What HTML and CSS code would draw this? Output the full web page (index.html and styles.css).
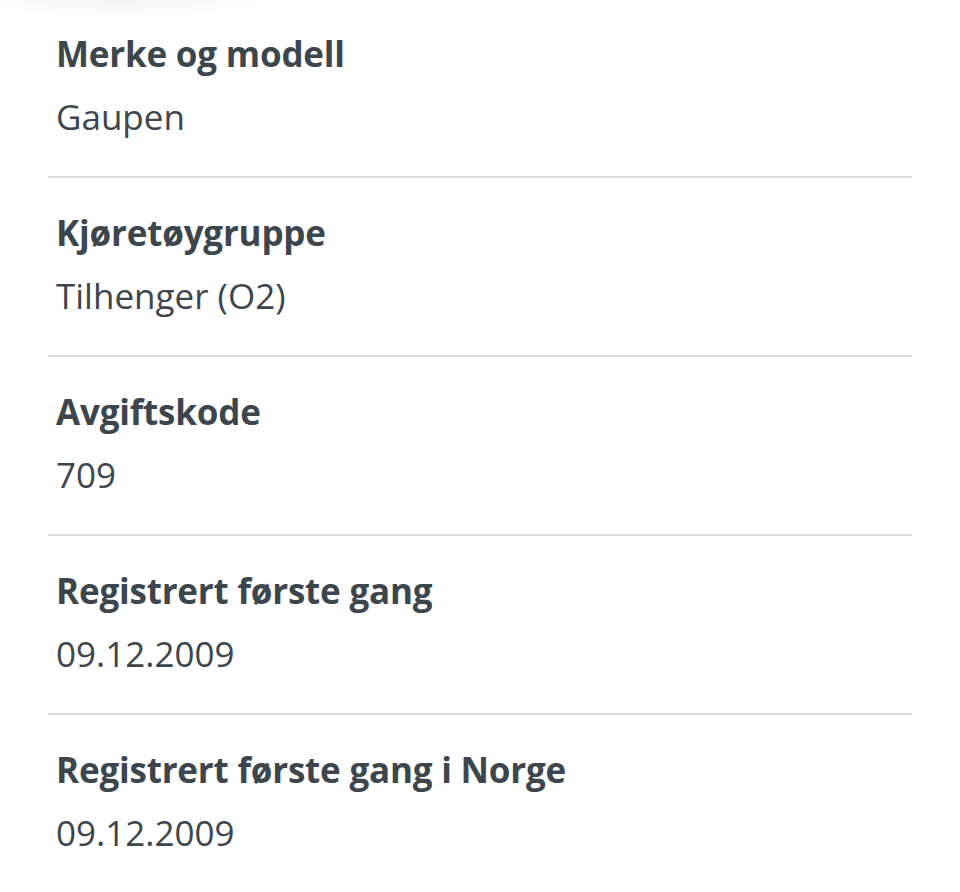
FILE: index.html
```html
<!DOCTYPE html>
<html lang="no">
<head>
  <meta charset="UTF-8">
  <title>Kjøretøyopplysninger</title>
  <link rel="stylesheet" href="styles.css">
</head>
<body>

<div class="top-shade"></div>

<!-- Vehicle details list -->
<dl class="details">
  <div class="detail-row">
    <dt>Merke og modell</dt>
    <dd>Gaupen</dd>
  </div>
  <div class="detail-row">
    <dt>Kjøretøygruppe</dt>
    <dd>Tilhenger (O2)</dd>
  </div>
  <div class="detail-row">
    <dt>Avgiftskode</dt>
    <dd>709</dd>
  </div>
  <div class="detail-row">
    <dt>Registrert første gang</dt>
    <dd>09.12.2009</dd>
  </div>
  <div class="detail-row">
    <dt>Registrert første gang i Norge</dt>
    <dd>09.12.2009</dd>
  </div>
</dl>

</body>
</html>
```

FILE: styles.css
```css
body {
  margin: 0;
  background-color: #ffffff;
  color: #3d464d;
  font-family: "Open Sans", Lato, sans-serif;
  overflow: hidden;
}
.top-shade {
  position: absolute;
  top: -30px;
  left: -40px;
  width: 320px;
  height: 50px;
  background: radial-gradient(ellipse at center, rgba(0,0,0,0.06), rgba(0,0,0,0) 70%);
  pointer-events: none;
}
.details {
  margin: -1px 48px 0;
  padding: 0;
}
.detail-row {
  display: flex;
  flex-direction: column;
  gap: 19px;
  padding: 33px 8px 37px;
  border-bottom: 2px solid #dcdcdc;
}
.detail-row dt {
  margin: 0;
  font-size: 35px;
  line-height: 44px;
  font-weight: 700;
  letter-spacing: -0.2px;
}
.detail-row dd {
  margin: 0;
  font-size: 35px;
  line-height: 44px;
  font-weight: 400;
}
```
